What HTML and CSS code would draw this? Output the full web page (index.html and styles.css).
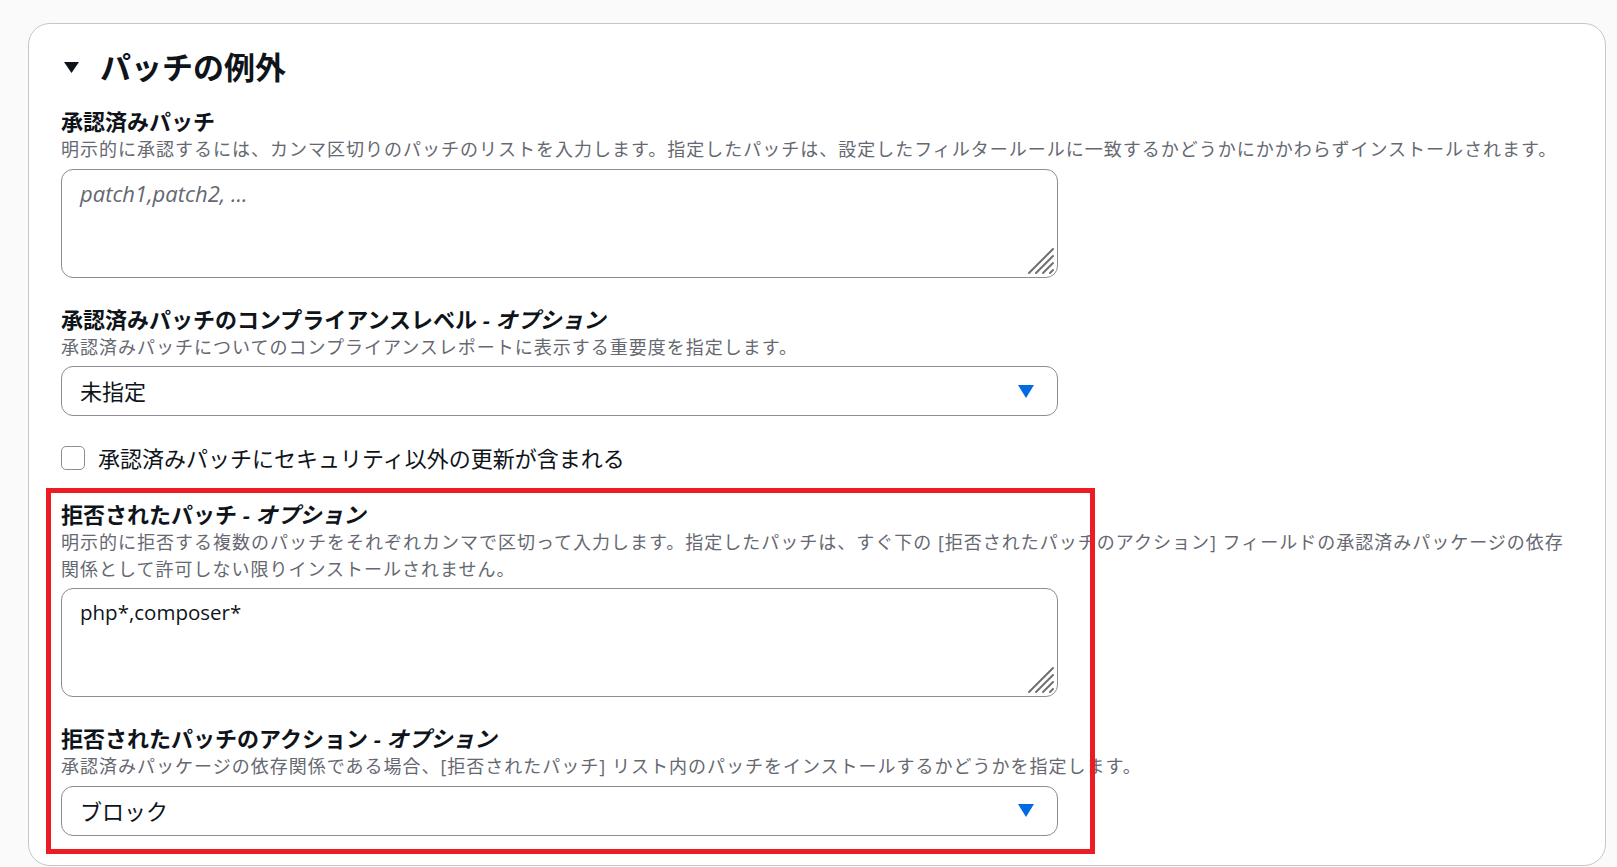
FILE: index.html
```html
<!DOCTYPE html>
<html lang="ja">
<head>
<meta charset="utf-8">
<title>パッチの例外</title>
<link rel="stylesheet" href="styles.css">
</head>
<body>
<div class="page">
  <section class="card">
    <h2 class="card-title">
      <svg class="caret" width="15" height="11" viewBox="0 0 15 11"><polygon points="0,0 15,0 7.5,11" fill="#0f141a"/></svg>
      <span>パッチの例外</span>
    </h2>
    <div class="fields">
      <div class="field">
        <div class="label">承認済みパッチ</div>
        <div class="desc">明示的に承認するには、カンマ区切りのパッチのリストを入力します。指定したパッチは、設定したフィルタールールに一致するかどうかにかかわらずインストールされます。</div>
        <div class="textarea-wrap">
          <textarea class="textarea" placeholder="patch1,patch2, ..."></textarea>
          <svg class="grip" width="28" height="28" viewBox="0 0 28 28"><g stroke="#707070" stroke-width="2" stroke-linecap="round"><line x1="2" y1="26" x2="26" y2="2"/><line x1="9" y1="26" x2="26" y2="9"/><line x1="16" y1="26" x2="26" y2="16"/><line x1="23" y1="26" x2="26" y2="23"/></g></svg>
        </div>
      </div>
      <div class="field">
        <div class="label">承認済みパッチのコンプライアンスレベル <i>- オプション</i></div>
        <div class="desc">承認済みパッチについてのコンプライアンスレポートに表示する重要度を指定します。</div>
        <div class="select">
          <span class="select-value">未指定</span>
          <svg class="select-arrow" width="16" height="13" viewBox="0 0 16 13"><polygon points="0,0 16,0 8,13" fill="#006ce0"/></svg>
        </div>
      </div>
      <label class="checkbox-row">
        <span class="checkbox"></span>
        <span class="checkbox-label">承認済みパッチにセキュリティ以外の更新が含まれる</span>
      </label>
      <div class="field">
        <div class="label">拒否されたパッチ <i>- オプション</i></div>
        <div class="desc">明示的に拒否する複数のパッチをそれぞれカンマで区切って入力します。指定したパッチは、すぐ下の [拒否されたパッチのアクション] フィールドの承認済みパッケージの依存関係として許可しない限りインストールされません。</div>
        <div class="textarea-wrap">
          <textarea class="textarea">php*,composer*</textarea>
          <svg class="grip" width="28" height="28" viewBox="0 0 28 28"><g stroke="#707070" stroke-width="2" stroke-linecap="round"><line x1="2" y1="26" x2="26" y2="2"/><line x1="9" y1="26" x2="26" y2="9"/><line x1="16" y1="26" x2="26" y2="16"/><line x1="23" y1="26" x2="26" y2="23"/></g></svg>
        </div>
      </div>
      <div class="field">
        <div class="label">拒否されたパッチのアクション <i>- オプション</i></div>
        <div class="desc">承認済みパッケージの依存関係である場合、[拒否されたパッチ] リスト内のパッチをインストールするかどうかを指定します。</div>
        <div class="select">
          <span class="select-value">ブロック</span>
          <svg class="select-arrow" width="16" height="13" viewBox="0 0 16 13"><polygon points="0,0 16,0 8,13" fill="#006ce0"/></svg>
        </div>
      </div>
    </div>
    <div class="highlight"></div>
  </section>
</div>
</body>
</html>
```

FILE: styles.css
```css
html, body {
  margin: 0;
  padding: 0;
  overflow: hidden;
  height: 867px;
  background: #fafafa;
  font-family: "Open Sans", "Noto Sans CJK JP", sans-serif;
  color: #0f141a;
}

.page {
  padding: 23px 0 0 28px;
}

.card {
  position: relative;
  box-sizing: border-box;
  width: 1578px;
  background: #ffffff;
  border: 1px solid #c6c6cd;
  border-radius: 22px;
  padding: 23px 32px 29px 32px;
}

.card-title {
  display: flex;
  align-items: center;
  gap: 21px;
  margin: 0 0 19px 0;
  height: 40px;
  font-size: 31px;
  line-height: 40px;
  font-weight: 700;
  color: #0f141a;
}

.caret {
  margin-left: 3px;
  flex: none;
}

.fields {
  display: flex;
  flex-direction: column;
  gap: 26px;
}

.field {
  display: flex;
  flex-direction: column;
}

.label {
  font-size: 22px;
  line-height: 30px;
  font-weight: 700;
  color: #0f141a;
}

.label i {
  font-style: italic;
}

.desc {
  font-size: 18px;
  letter-spacing: 1px;
  line-height: 26.6px;
  color: #656871;
  margin-bottom: 6px;
}

.textarea-wrap {
  position: relative;
  width: 997px;
  height: 109px;
}

.textarea {
  box-sizing: border-box;
  display: block;
  width: 100%;
  height: 100%;
  margin: 0;
  resize: none;
  border: 1px solid #8c8c94;
  border-radius: 12px;
  padding: 9px 18px;
  font-family: "Open Sans", "Noto Sans CJK JP", sans-serif;
  font-size: 20.5px;
  line-height: 28.6px;
  color: #0f141a;
  background: #ffffff;
  outline: none;
}

.textarea::placeholder {
  color: #656871;
  font-style: italic;
  font-size: 22px;
  opacity: 1;
}

.grip {
  position: absolute;
  right: 3px;
  bottom: 3px;
}

.select {
  box-sizing: border-box;
  display: flex;
  align-items: center;
  justify-content: space-between;
  width: 997px;
  height: 50px;
  border: 1px solid #8c8c94;
  border-radius: 12px;
  padding: 0 23px 0 18px;
  background: #ffffff;
}

.select-value {
  font-size: 22px;
  line-height: 30px;
  color: #0f141a;
}

.select-arrow {
  flex: none;
}

.checkbox-row {
  display: flex;
  align-items: center;
  gap: 13px;
  height: 31px;
}

.checkbox {
  box-sizing: border-box;
  width: 24px;
  height: 24px;
  border: 1.5px solid #8c8c94;
  border-radius: 5px;
  background: #ffffff;
  flex: none;
}

.checkbox-label {
  font-size: 22px;
  line-height: 30px;
  color: #0f141a;
}

.highlight {
  position: absolute;
  box-sizing: border-box;
  left: 17px;
  top: 464px;
  width: 1049px;
  height: 366px;
  border: 5px solid #ec1c24;
  pointer-events: none;
}
```
